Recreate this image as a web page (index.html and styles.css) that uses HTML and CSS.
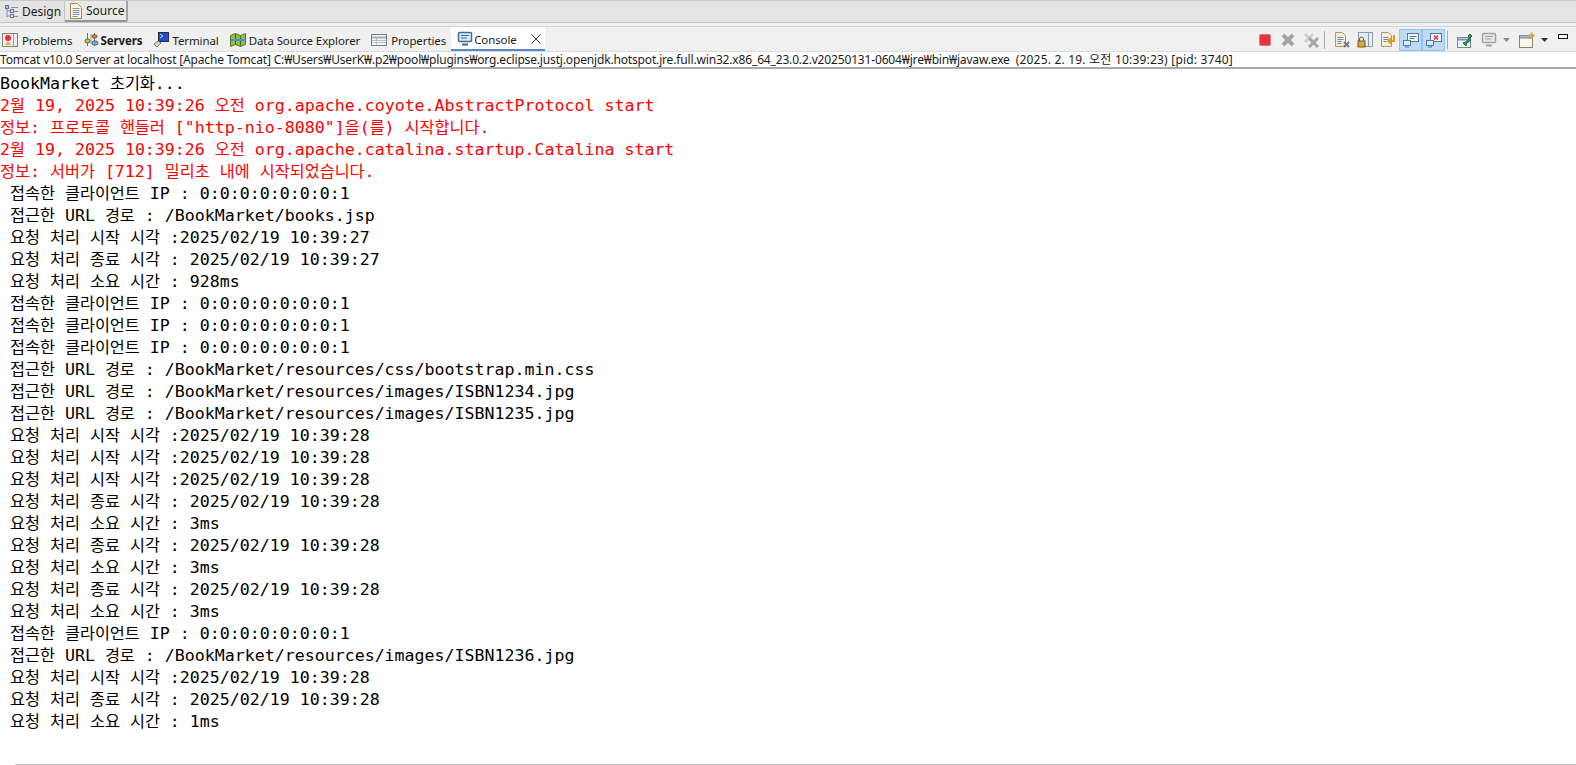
FILE: index.html
```html
<!DOCTYPE html>
<html lang="ko">
<head>
<meta charset="utf-8">
<title>Console</title>
<link rel="stylesheet" href="styles.css">
</head>
<body>
<div class="editor-tabs">
  <div class="etab">
    <svg class="ico" viewBox="0 0 16 16"><path d="M4 3v10M4 7h5M4 12h5" fill="none" stroke="#7d93a8"/><path d="M8 3.500h7M11 7.500h4M11 12.500h4" stroke="#7d93a8"/><rect x="2.500" y="1.500" width="3" height="3" fill="#b9c8d8" stroke="#5f7690"/><rect x="7.500" y="5.500" width="3" height="3" fill="#dbe4ec" stroke="#5f7690"/><rect x="7.500" y="10.500" width="3" height="3" fill="#dbe4ec" stroke="#5f7690"/></svg>
    <span>Design</span>
  </div>
  <div class="etab etab-on">
    <svg class="ico" viewBox="0 0 16 16"><path d="M2.500 0.500h7l4 4v11h-11z" fill="#fbf6e4" stroke="#a08a50"/><path d="M4.500 5.500h7M4.500 7.500h7M4.500 9.500h7M4.500 11.500h7M4.500 13.500h5" stroke="#7895b8"/></svg>
    <span>Source</span>
  </div>
</div>
<div class="gap-band"></div>
<div class="view-tabs">
  <div class="vtab vtab-first">
    <svg class="ico" viewBox="0 0 16 16"><rect x="0.500" y="1.500" width="15" height="13" fill="#e9edf3" stroke="#8b7f70"/><path d="M11.500 2v12" stroke="#8fa5be"/><circle cx="6" cy="6" r="3" fill="#e8302c"/><path d="M3 13l3-4 3 4z" fill="#f2a93a"/></svg>
    <span>Problems</span>
  </div>
  <div class="vtab vtab-bold">
    <svg class="ico" viewBox="0 0 16 16"><path d="M4.500 1v13M11.500 1v13" stroke="#6a6f60"/><path d="M8 2v10" stroke="#8d9aa8"/><rect x="2" y="7" width="5" height="4" rx="2" fill="#c9c23c" stroke="#6b7326"/><rect x="9" y="9" width="6" height="4" rx="2" fill="#6fa8d8" stroke="#3d6a96"/><rect x="9" y="3" width="5" height="3" rx="1.500" fill="#d48c3c" stroke="#7a5222"/></svg>
    <span>Servers</span>
  </div>
  <div class="vtab">
    <svg class="ico" viewBox="0 0 16 16"><rect x="5.500" y="0.500" width="10" height="9" fill="#1f4fd0" stroke="#2a2a33"/><path d="M7 2l3 2-3 2" fill="none" stroke="#bcd6ff"/><path d="M5 9l-4 3 3 3 4-4z" fill="#d8d8d0" stroke="#77776c"/></svg>
    <span>Terminal</span>
  </div>
  <div class="vtab">
    <svg class="ico" viewBox="0 0 16 16"><path d="M0.500 3.500l5-2 5 2 5-2v11l-5 2-5-2-5 2z" fill="#8fbf4a" stroke="#5a7a22"/><path d="M5.500 2v11M10.500 4v10" stroke="#3f6a1e"/><path d="M1 8h14" stroke="#4c8fd0" stroke-width="2"/></svg>
    <span>Data Source Explorer</span>
  </div>
  <div class="vtab vtab-props">
    <svg class="ico" viewBox="0 0 16 16"><rect x="0.500" y="2.500" width="15" height="11" fill="#f7f5ef" stroke="#737f8c"/><path d="M1 5.500h14" stroke="#9db0c6" stroke-width="2"/><path d="M5.500 6v7M1 8.500h14M1 10.500h14" stroke="#b7c2cd"/></svg>
    <span>Properties</span>
  </div>
  <div class="vtab vtab-on">
    <svg class="ico" viewBox="0 0 16 16"><rect x="1.500" y="1.500" width="13" height="9" rx="1" fill="#dce8f4" stroke="#3d6d99" stroke-width="1.500"/><path d="M4 4.500h8M4 7h6" stroke="#3d6d99"/><path d="M5 13.500h6" stroke="#3d6d99" stroke-width="2"/></svg>
    <span>Console</span>
    <svg class="close" viewBox="0 0 10 10"><path d="M0.500 0.500l9 9M9.500 0.500l-9 9" stroke="#333" fill="none"/></svg>
  </div>
  <div class="toolbar">
    <svg class="ico" viewBox="0 0 16 16"><rect x="2.500" y="2.500" width="11" height="11" rx="1" fill="#e8323c" stroke="#d88088"/></svg>
    <svg class="ico" viewBox="0 0 16 16"><path d="M3 3l10 10M13 3L3 13" stroke="#a4a4a4" stroke-width="4"/></svg>
    <svg class="ico" viewBox="0 0 16 16"><path d="M2 2l8 8M10 2l-8 8" stroke="#cfcfcf" stroke-width="3"/><path d="M6 6l9 9M15 6l-9 9" stroke="#a4a4a4" stroke-width="3"/></svg>
    <i class="sep"></i>
    <svg class="ico" viewBox="0 0 16 16"><path d="M1.500 0.500h7l3 3v11h-10z" fill="#f4eed8" stroke="#a89a70"/><path d="M3.500 5.500h6M3.500 7.500h6M3.500 9.500h4M3.500 11.500h4" stroke="#6e88a8"/><path d="M10 10l5 5M15 10l-5 5" stroke="#777" stroke-width="2"/></svg>
    <svg class="ico" viewBox="0 0 16 16"><rect x="1.500" y="0.500" width="14" height="14" fill="#e4ecf4" stroke="#8c9aaa"/><path d="M11.500 1v13" stroke="#8c9aaa"/><rect x="1" y="9" width="7" height="6" fill="#d8a63c" stroke="#7c5a1a"/><path d="M2.500 9V7a2 2 0 014 0v2" fill="none" stroke="#7c5a1a"/></svg>
    <svg class="ico" viewBox="0 0 16 16"><path d="M1.500 0.500h7l3 3v11h-10z" fill="#f4eed8" stroke="#a89a70"/><path d="M3.500 5.500h5M3.500 7.500h5M3.500 9.500h3" stroke="#6e88a8"/><path d="M14 3v6H9M11 6.500L8.500 9l2.500 2.500" fill="none" stroke="#d89a1c" stroke-width="2"/></svg>
    <div class="toggles">
      <span class="tog"><svg class="ico" viewBox="0 0 16 16"><rect x="4.500" y="1.500" width="11" height="8" fill="#f2f6fa" stroke="#4f78a4"/><path d="M6.500 4.500h7M6.500 6.500h5" stroke="#4f78a4"/><rect x="0.500" y="8.500" width="7" height="5" fill="#dce8f4" stroke="#4f78a4"/><path d="M2 15h4" stroke="#4f78a4"/></svg></span>
      <span class="tog"><svg class="ico" viewBox="0 0 16 16"><rect x="4.500" y="1.500" width="11" height="8" fill="#f2f6fa" stroke="#4f78a4"/><path d="M8 3.500l4 4M12 3.500l-4 4" stroke="#e0303c" stroke-width="1.500"/><rect x="0.500" y="8.500" width="7" height="5" fill="#dce8f4" stroke="#4f78a4"/><path d="M2 15h4" stroke="#4f78a4"/></svg></span>
    </div>
    <i class="sep sep-tight"></i>
    <svg class="ico" viewBox="0 0 16 16"><rect x="0.500" y="5.500" width="13" height="10" fill="#f2f5f8" stroke="#7b8a9a"/><path d="M1 7.500h12" stroke="#6f9ac8" stroke-width="2"/><path d="M6 11l3-1 3-4 2 2-4 3-1 3z" fill="#2f9a4a" stroke="#1f7035"/><path d="M11 4l2-2 2 2-2 2z" fill="#2f9a4a" stroke="#1f7035"/></svg>
    <svg class="ico ico-mon" viewBox="0 0 16 16"><rect x="1.500" y="1.500" width="13" height="9" rx="1" fill="#e8e8e8" stroke="#a2a2a2" stroke-width="1.500"/><path d="M4 4.500h8M4 7h6" stroke="#a2a2a2"/><path d="M5 13.500h6" stroke="#a2a2a2" stroke-width="2"/></svg>
    <i class="caret caret-dim"></i>
    <svg class="ico ico-new" viewBox="0 0 16 16"><rect x="0.500" y="3.500" width="13" height="12" fill="#fbf8e8" stroke="#8a8468"/><path d="M1 5.500h12" stroke="#6f9ac8" stroke-width="2"/><path d="M12.500 0.500v6M9.500 3.500h6" stroke="#d8a63c" stroke-width="2"/></svg>
    <i class="caret"></i>
    <i class="minbox"></i>
  </div>
</div>
<div class="status">Tomcat v10.0 Server at localhost [Apache Tomcat] C:₩Users₩UserK₩.p2₩pool₩plugins₩org.eclipse.justj.openjdk.hotspot.jre.full.win32.x86_64_23.0.2.v20250131-0604₩jre₩bin₩javaw.exe  <span class="status-tail">(2025. 2. 19. 오전 10:39:23) [pid: 3740]</span></div>
<main class="console">
<div class="ln">BookMarket <span class="k">초기화</span>...</div>
<div class="ln err">2<span class="k">월</span> 19, 2025 10:39:26 <span class="k">오전</span> org.apache.coyote.AbstractProtocol start</div>
<div class="ln err"><span class="k">정보</span>: <span class="k">프로토콜</span> <span class="k">핸들러</span> ["http-nio-8080"]<span class="k">을</span>(<span class="k">를</span>) <span class="k">시작합니다</span>.</div>
<div class="ln err">2<span class="k">월</span> 19, 2025 10:39:26 <span class="k">오전</span> org.apache.catalina.startup.Catalina start</div>
<div class="ln err"><span class="k">정보</span>: <span class="k">서버가</span> [712] <span class="k">밀리초</span> <span class="k">내에</span> <span class="k">시작되었습니다</span>.</div>
<div class="ln"> <span class="k">접속한</span> <span class="k">클라이언트</span> IP : 0:0:0:0:0:0:0:1</div>
<div class="ln"> <span class="k">접근한</span> URL <span class="k">경로</span> : /BookMarket/books.jsp</div>
<div class="ln"> <span class="k">요청</span> <span class="k">처리</span> <span class="k">시작</span> <span class="k">시각</span> :2025/02/19 10:39:27</div>
<div class="ln"> <span class="k">요청</span> <span class="k">처리</span> <span class="k">종료</span> <span class="k">시각</span> : 2025/02/19 10:39:27</div>
<div class="ln"> <span class="k">요청</span> <span class="k">처리</span> <span class="k">소요</span> <span class="k">시간</span> : 928ms</div>
<div class="ln"> <span class="k">접속한</span> <span class="k">클라이언트</span> IP : 0:0:0:0:0:0:0:1</div>
<div class="ln"> <span class="k">접속한</span> <span class="k">클라이언트</span> IP : 0:0:0:0:0:0:0:1</div>
<div class="ln"> <span class="k">접속한</span> <span class="k">클라이언트</span> IP : 0:0:0:0:0:0:0:1</div>
<div class="ln"> <span class="k">접근한</span> URL <span class="k">경로</span> : /BookMarket/resources/css/bootstrap.min.css</div>
<div class="ln"> <span class="k">접근한</span> URL <span class="k">경로</span> : /BookMarket/resources/images/ISBN1234.jpg</div>
<div class="ln"> <span class="k">접근한</span> URL <span class="k">경로</span> : /BookMarket/resources/images/ISBN1235.jpg</div>
<div class="ln"> <span class="k">요청</span> <span class="k">처리</span> <span class="k">시작</span> <span class="k">시각</span> :2025/02/19 10:39:28</div>
<div class="ln"> <span class="k">요청</span> <span class="k">처리</span> <span class="k">시작</span> <span class="k">시각</span> :2025/02/19 10:39:28</div>
<div class="ln"> <span class="k">요청</span> <span class="k">처리</span> <span class="k">시작</span> <span class="k">시각</span> :2025/02/19 10:39:28</div>
<div class="ln"> <span class="k">요청</span> <span class="k">처리</span> <span class="k">종료</span> <span class="k">시각</span> : 2025/02/19 10:39:28</div>
<div class="ln"> <span class="k">요청</span> <span class="k">처리</span> <span class="k">소요</span> <span class="k">시간</span> : 3ms</div>
<div class="ln"> <span class="k">요청</span> <span class="k">처리</span> <span class="k">종료</span> <span class="k">시각</span> : 2025/02/19 10:39:28</div>
<div class="ln"> <span class="k">요청</span> <span class="k">처리</span> <span class="k">소요</span> <span class="k">시간</span> : 3ms</div>
<div class="ln"> <span class="k">요청</span> <span class="k">처리</span> <span class="k">종료</span> <span class="k">시각</span> : 2025/02/19 10:39:28</div>
<div class="ln"> <span class="k">요청</span> <span class="k">처리</span> <span class="k">소요</span> <span class="k">시간</span> : 3ms</div>
<div class="ln"> <span class="k">접속한</span> <span class="k">클라이언트</span> IP : 0:0:0:0:0:0:0:1</div>
<div class="ln"> <span class="k">접근한</span> URL <span class="k">경로</span> : /BookMarket/resources/images/ISBN1236.jpg</div>
<div class="ln"> <span class="k">요청</span> <span class="k">처리</span> <span class="k">시작</span> <span class="k">시각</span> :2025/02/19 10:39:28</div>
<div class="ln"> <span class="k">요청</span> <span class="k">처리</span> <span class="k">종료</span> <span class="k">시각</span> : 2025/02/19 10:39:28</div>
<div class="ln"> <span class="k">요청</span> <span class="k">처리</span> <span class="k">소요</span> <span class="k">시간</span> : 1ms</div>
</main>
<div class="scrollbar"></div>
</body>
</html>
```
FILE: styles.css
```css
* { box-sizing: border-box; }
html, body { margin: 0; height: 100%; }
body {
  width: 1576px;
  height: 765px;
  overflow: hidden;
  background: #fff;
  display: flex;
  flex-direction: column;
  font-family: "Noto Sans", "Noto Sans CJK KR", sans-serif;
  font-size: 12px;
  color: #1c1c1c;
}
.ico { width: 16px; height: 16px; flex: none; display: block; }

.editor-tabs {
  height: 23px;
  flex: none;
  display: flex;
  align-items: stretch;
  background: #e4e4e4;
  border-top: 1px solid #c8c8c8;
  border-bottom: 1px solid #c4c4c4;
}
.etab {
  width: 64px;
  display: flex;
  align-items: center;
  gap: 3px;
  padding-left: 3px;
}
.etab-on {
  background: #e9e9e9;
  border-left: 1px solid #c4c4c4;
  border-right: 2px solid #a4a4a4;
  border-bottom: 2px solid #969696;
  border-bottom-right-radius: 2px;
  border-bottom-left-radius: 2px;
  gap: 2px;
}
.gap-band { height: 4px; flex: none; background: #f0f0f0; border-bottom: 1px solid #d4d4d4; }

.view-tabs {
  height: 25px;
  flex: none;
  display: flex;
  align-items: center;
  background: #f0f0f0;
  border-bottom: 1px solid #dcdcdc;
  font-size: 11.5px;
  letter-spacing: -0.1px;
}
.vtab {
  height: 24px;
  display: flex;
  align-items: center;
  gap: 3px;
  padding: 2px 5px 0 6px;
}
.vtab-first { padding-left: 2px; gap: 4px; }
.vtab-bold { font-weight: 700; gap: 1px; }
.vtab-props { gap: 4px; }
.vtab-on {
  background: #fff;
  border-bottom: 2px solid #5b87c5;
  width: 94px;
  flex: none;
  gap: 1px;
  padding-right: 4px;
}
.close { width: 10px; height: 10px; flex: none; margin-left: auto; }
.toolbar {
  margin-left: auto;
  display: flex;
  align-items: center;
  gap: 7px;
  padding: 2px 8px 0 0;
}
.sep { width: 1px; height: 18px; flex: none; background: #a8a8a8; margin: 0 2px 0 -2px; }
.sep-tight { margin-left: -5px; }
.toggles { display: flex; margin-left: -4px; }
.tog {
  width: 23px;
  height: 22px;
  display: flex;
  align-items: center;
  justify-content: center;
  background: #bcdcf6;
  border: 1px solid #90c4ee;
}
.ico-mon { margin-left: 1px; }
.ico-new { margin-left: 2px; }
.caret { flex: none; width: 7px; height: 4px; margin-left: -1px; background: #333; clip-path: polygon(0 0, 100% 0, 50% 100%); }
.caret-dim { background: #8a8a8a; }
.minbox { flex: none; width: 10px; height: 5px; border: 1px solid #111; background: #fff; margin: -7px 0 0 3px; }

.status {
  height: 17px;
  flex: none;
  line-height: 16px;
  white-space: pre;
  letter-spacing: -0.16px;
  background: #fff;
  border-bottom: 2px solid #a8a8a8;
  overflow: hidden;
}
.status-tail { letter-spacing: 0.2px; }

.console {
  flex: 1;
  min-height: 0;
  padding-top: 2px;
  font-family: "DejaVu Sans Mono", monospace;
  font-size: 16.6px;
  color: #000;
}
.ln { height: 22px; line-height: 22px; white-space: pre; }
.err { color: #f00; }
.k { font-family: "Noto Sans CJK KR", sans-serif; font-size: 16.3px; }

.scrollbar { height: 1px; flex: none; margin-left: 15px; background: #c8c8c8; }
```
